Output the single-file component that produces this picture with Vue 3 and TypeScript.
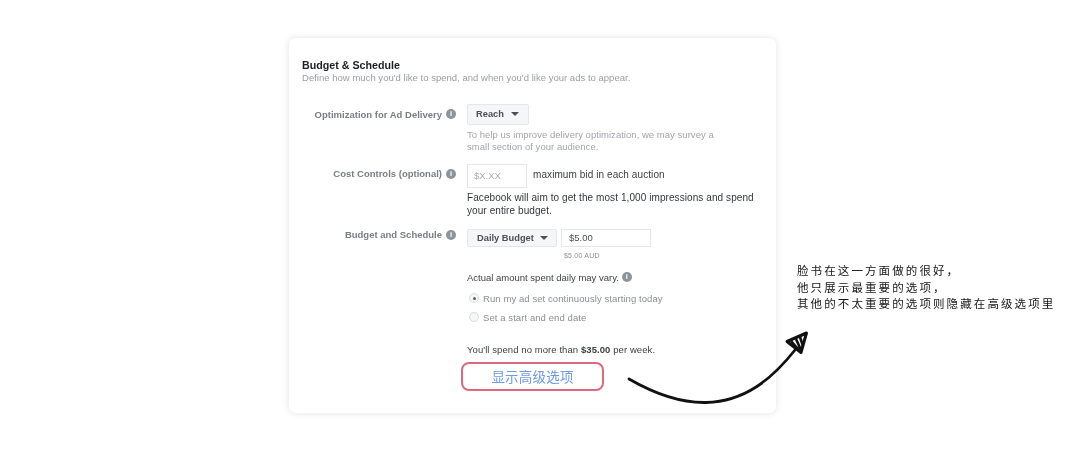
<template>
  <div class="page">
    <section class="card">
      <h2 class="title">Budget &amp; Schedule</h2>
      <p class="subtitle">Define how much you'd like to spend, and when you'd like your ads to appear.</p>

      <!-- 投放优化 -->
      <div class="row row-delivery">
        <div class="label label-delivery">
          <span>Optimization for Ad Delivery</span>
          <span class="info">i</span>
        </div>
        <div class="field">
          <button class="select select-reach">Reach <i class="caret"></i></button>
          <p class="hint">To help us improve delivery optimization, we may survey a<br />small section of your audience.</p>
        </div>
      </div>

      <!-- 费用控制 -->
      <div class="row row-cost">
        <div class="label label-cost">
          <span>Cost Controls (optional)</span>
          <span class="info">i</span>
        </div>
        <div class="field">
          <div class="inline">
            <div class="input input-bid">$X.XX</div>
            <span class="bid-text">maximum bid in each auction</span>
          </div>
          <p class="body-text">Facebook will aim to get the most 1,000 impressions and spend<br />your entire budget.</p>
        </div>
      </div>

      <!-- 预算和排期 -->
      <div class="row row-budget">
        <div class="label label-budget">
          <span>Budget and Schedule</span>
          <span class="info">i</span>
        </div>
        <div class="field">
          <div class="inline budget-inline">
            <button class="select select-daily">Daily Budget <i class="caret"></i></button>
            <div class="input input-amount">$5.00</div>
          </div>
          <div class="aud">$5.00 AUD</div>
          <div class="vary">Actual amount spent daily may vary. <span class="info">i</span></div>
          <div v-for="item in schedules" :key="item.text" class="radio-row">
            <span class="radio" :class="{ checked: item.checked }"></span>
            <span>{{ item.text }}</span>
          </div>
          <div class="spend">You'll spend no more than <b>$35.00</b> per week.</div>
        </div>
      </div>

      <button class="advanced">显示高级选项</button>
    </section>

    <!-- 标注 -->
    <p class="note">脸书在这一方面做的很好，<br />他只展示最重要的选项，<br />其他的不太重要的选项则隐藏在高级选项里</p>
    <svg class="arrow" width="1080" height="450" viewBox="0 0 1080 450" fill="none">
      <path d="M629 379C655 394 680 403 706 402.500C745 401.500 772 379 795 350" stroke="#111" stroke-width="2.800" stroke-linecap="round" />
      <path d="M787 341.500L806.500 333L801 352.500Z" fill="#fff" stroke="#111" stroke-width="3" stroke-linejoin="round" />
      <path d="M791 341L799 350M796 339L801 350M800 337L803 346" stroke="#111" stroke-width="2.600" />
    </svg>
  </div>
</template>

<script setup lang="ts">
const schedules = [
  { text: 'Run my ad set continuously starting today', checked: true },
  { text: 'Set a start and end date', checked: false }
]
</script>

<style scoped>
.page {
  position: relative;
  width: 1080px;
  height: 450px;
  overflow: hidden;
  padding: 38px 0 0 289px;
  box-sizing: border-box;
  background: #fff;
  font-family: "Liberation Sans", "Noto Sans CJK SC", sans-serif;
  filter: blur(0.35px);
}

.card {
  width: 487px;
  height: 375px;
  box-sizing: border-box;
  padding: 20px 13px 0;
  background: #fff;
  border-radius: 7px;
  box-shadow: 0 0 7px rgba(60, 60, 80, 0.14);
}

.title {
  margin: 0;
  font-size: 10.700px;
  line-height: 14px;
  font-weight: 700;
  color: #1c1e21;
}

.subtitle {
  margin: 0;
  font-size: 9.500px;
  line-height: 11px;
  letter-spacing: 0.02px;
  color: #9a9da3;
}

.row {
  display: grid;
  grid-template-columns: 154px 1fr;
  column-gap: 11px;
}

.row-delivery { margin-top: 20px; }
.row-cost { margin-top: 11px; }
.row-budget { margin-top: 12px; }

.label {
  display: flex;
  justify-content: flex-end;
  align-items: center;
  gap: 4px;
  height: 14px;
  font-size: 9.500px;
  font-weight: 700;
  color: #7a7d83;
  white-space: nowrap;
}

.label-delivery { margin-top: 4px; }
.label-cost { margin-top: 3px; }
.label-budget { margin-top: -1px; }

.info {
  display: inline-flex;
  justify-content: center;
  align-items: center;
  width: 10px;
  height: 10px;
  border-radius: 50%;
  background: #8d949e;
  color: #fff;
  font-size: 7.500px;
  font-weight: 700;
  line-height: 1;
}

.select {
  display: inline-flex;
  align-items: center;
  border: 1px solid #e4e6ea;
  border-radius: 2px;
  background: #f5f6f7;
  padding: 0;
  font-family: inherit;
  font-size: 9.300px;
  font-weight: 700;
  color: #4b4f56;
  box-sizing: border-box;
}

.select-reach {
  width: 62px;
  height: 21px;
  padding-left: 8px;
  gap: 7px;
}

.select-daily {
  width: 90px;
  height: 18px;
  padding-left: 9px;
  gap: 6px;
}

.caret {
  width: 0;
  height: 0;
  border-left: 4px solid transparent;
  border-right: 4px solid transparent;
  border-top: 4px solid #4b4f56;
}

.hint {
  margin: 4px 0 0;
  font-size: 9.500px;
  line-height: 12px;
  letter-spacing: 0.03px;
  color: #a2a5aa;
}

.inline {
  display: flex;
  align-items: center;
}

.input {
  border: 1px solid #e4e6ea;
  background: #fff;
  box-sizing: border-box;
  display: flex;
  align-items: center;
}

.input-bid {
  width: 60px;
  height: 24px;
  padding-left: 6px;
  font-size: 9.500px;
  color: #a8abb0;
}

.bid-text {
  margin-left: 6px;
  margin-top: -2px;
  font-size: 10px;
  letter-spacing: 0.08px;
  color: #3a3d42;
}

.body-text {
  margin: 3px 0 0;
  font-size: 10px;
  line-height: 13px;
  letter-spacing: 0.08px;
  color: #33363b;
}

.budget-inline { gap: 4px; }

.input-amount {
  width: 90px;
  height: 18px;
  padding-left: 7px;
  font-size: 9.500px;
  color: #4b4f56;
}

.aud {
  margin: 4px 0 0 97px;
  height: 9px;
  font-size: 7px;
  line-height: 9px;
  letter-spacing: 0.2px;
  color: #8d9096;
}

.vary {
  display: flex;
  align-items: center;
  gap: 3px;
  margin-top: 11px;
  height: 13px;
  font-size: 9.500px;
  color: #3f4247;
}

.radio-row {
  display: flex;
  align-items: center;
  gap: 4px;
  height: 13px;
  margin: 8px 0 0 2px;
  font-size: 9.500px;
  letter-spacing: 0.08px;
  color: #8a8d93;
}

.radio-row + .radio-row { margin-top: 6px; }

.radio {
  position: relative;
  width: 10px;
  height: 10px;
  border: 1px solid #dadde1;
  border-radius: 50%;
  background: #f5f6f7;
  box-sizing: border-box;
}

.radio.checked::after {
  content: "";
  position: absolute;
  left: 2.500px;
  top: 2.500px;
  width: 3px;
  height: 3px;
  border-radius: 50%;
  background: #5f6369;
}

.spend {
  margin-top: 19px;
  height: 13px;
  font-size: 9.500px;
  line-height: 13px;
  letter-spacing: 0.08px;
  color: #3a3d42;
}

.advanced {
  display: block;
  width: 143px;
  height: 29px;
  margin: 6px 0 0 159px;
  padding: 0;
  border: 2px solid #dc6a7c;
  border-radius: 8px;
  background: #fff;
  font-family: "Noto Sans CJK SC", sans-serif;
  font-size: 13.500px;
  color: #6d9ae8;
  letter-spacing: 0.2px;
}

.note {
  position: absolute;
  left: 797px;
  top: 262px;
  margin: 0;
  font-family: "Noto Sans CJK SC", sans-serif;
  font-size: 11.500px;
  line-height: 16.700px;
  letter-spacing: 2.100px;
  color: #161616;
  white-space: nowrap;
}

.arrow {
  position: absolute;
  left: 0;
  top: 0;
  pointer-events: none;
}
</style>
